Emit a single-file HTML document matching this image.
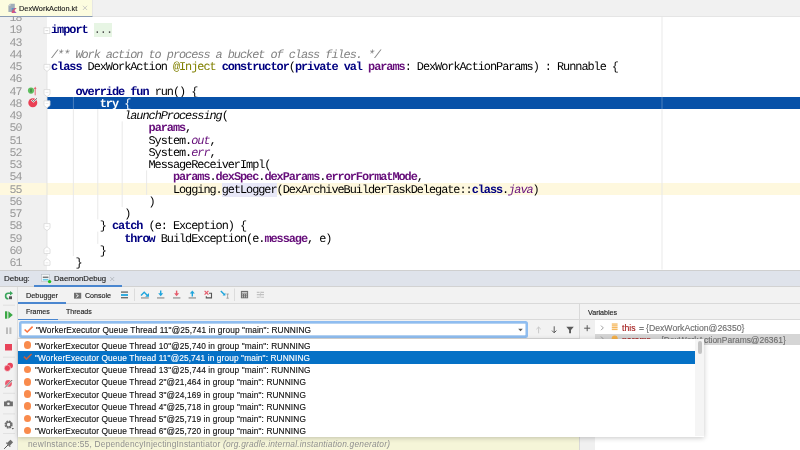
<!DOCTYPE html>
<html><head><meta charset="utf-8">
<style>
*{margin:0;padding:0;box-sizing:border-box}
html,body{width:800px;height:450px;overflow:hidden;background:#fff;font-family:"Liberation Sans",sans-serif;position:relative}
.a{position:absolute}
.ln,.ui,#tabtxt,#popup{will-change:transform}
.ui,#tabtxt,.prow{-webkit-text-stroke:0.14px currentColor}
#tabbar{left:0;top:0;width:800px;height:16.5px;background:#f1f1f1;border-bottom:1.6px solid #e5e5e5}
#tab{left:0;top:0;width:92.5px;height:16.5px;background:#fcfcdf;border-bottom:1.6px solid #8a9cb4;border-right:0.6px solid #e6e6e6}
#tabtxt{left:18.7px;top:3.9px;font-size:7.35px;color:#222;line-height:10px;white-space:nowrap}
#tabx{left:82px;top:3.5px;font-size:8px;color:#aaa;line-height:10px}
#gutter{left:0;top:16.5px;width:47px;height:253.5px;background:#f0f0f0}
#editor{left:47px;top:16.5px;width:753px;height:253.5px;background:#fff}
#code{left:0;top:16.5px;width:800px;height:253px;overflow:hidden}
.ln{position:absolute;left:0;width:800px;height:12.28px;font-family:"Liberation Mono",monospace;font-size:11.9px;letter-spacing:-1.04px;line-height:12.2px;white-space:pre;text-rendering:geometricPrecision}
.ln.exec{background:linear-gradient(to right,transparent 47px,#0751a8 47px)}
.ln.exec .txt,.ln.exec .txt span{color:#fff}
.ln.caret{background:#fef8de}
.num{position:absolute;left:0;width:21.6px;text-align:right;color:#999;top:2.2px;font-size:11.6px;letter-spacing:-0.86px}
.txt{position:absolute;left:51px;color:#000;top:0.9px}
.k,.kw{color:#000080;font-weight:bold}
.cm{color:#808080;font-style:italic}
.an{color:#808000}
.pr{color:#660e7a;font-weight:bold}
.st{color:#660e7a;font-style:italic}
.it{font-style:italic}
.fold{background:#e7f5e4;color:#555}
.ul{background:#e8e8f8}
.guide{position:absolute;width:1px;background:#e8e8e8}
#margin{left:662px;top:16px;width:1px;height:254px;background:#ececec}
/* debug */
#sep1{left:0;top:269.5px;width:800px;height:1px;background:#cfcfcf}
#dbar{left:0;top:270.5px;width:800px;height:15.5px;background:#dfe3eb}
#sep2{left:0;top:286px;width:800px;height:1px;background:#d2d2d2}
#lefttb{left:0;top:287px;width:18px;height:163px;background:#f2f2f2;border-right:1px solid #dedede}
#tb{left:18px;top:287px;width:783px;height:16.5px;background:#f2f2f2;border-bottom:1px solid #d9d9d9}
#frh{left:18px;top:303.5px;width:563px;height:16.5px;background:#f2f2f2;border-bottom:1px solid #d9d9d9}
#varh{left:579.3px;top:303.5px;width:220.7px;height:16.5px;background:#f2f2f2;border-bottom:1px solid #d9d9d9;border-left:1px solid #d9d9d9}
#combrow{left:18px;top:320px;width:563px;height:18.5px;background:#f2f2f2;border-bottom:1px solid #d9d9d9}
#combo{left:18.6px;top:320.9px;width:509.6px;height:17.4px;background:#fff;border:2px solid #8fbdf0;border-radius:2.5px;box-shadow:inset 0 0 0 0.4px #6aa6e6}
#frlist{left:18px;top:338.5px;width:563px;height:112px;background:#fff}
#botrow{left:18px;top:436px;width:563px;height:14px;background:#f5f5d8}
#plusc{left:579.3px;top:320px;width:15.9px;height:130px;background:#f0f0f0;border-left:1px solid #d9d9d9}
#vlist{left:595px;top:320px;width:205px;height:130px;background:#fff}
#vsel{left:595px;top:333.5px;width:205px;height:11.5px;background:#d5d5d5}
.ui{position:absolute;white-space:nowrap;color:#222}
#popup{left:18px;top:338.5px;width:686px;height:97.5px;background:#fff;box-shadow:0 1px 5px rgba(0,0,0,0.22)}
.prow{position:absolute;left:0;width:677px;height:12.15px;font-size:8.3px;letter-spacing:0.12px;line-height:12.15px;color:#111;white-space:nowrap}
.prow .dot{position:absolute;left:5.6px;top:2.3px;width:7.5px;height:7.5px;border-radius:50%;background:#f98b4d}
.prow .t{position:absolute;left:17px;top:0.6px}
.prow.sel{background:#0571c6;color:#fff}
#sbtrack{left:695px;top:338.5px;width:9px;height:97.5px;background:#f5f5f5}
#sbthumb{left:697.8px;top:340.7px;width:4px;height:13px;background:#c4c4c4;border-radius:2px}
</style></head><body>
<div id="tabbar" class="a"></div>
<div id="tab" class="a"></div>
<div id="tabtxt" class="a">DexWorkAction.kt</div>
<div id="gutter" class="a"></div>
<div id="editor" class="a"></div>
<div id="code" class="a">
<div class="ln" style="top:-5.37px"><span class="num">18</span><span class="txt"></span></div>
<div class="ln" style="top:6.88px"><span class="num">19</span><span class="txt"><span class="k">import</span> <span class="fold">...</span></span></div>
<div class="ln" style="top:19.13px"><span class="num">43</span><span class="txt"></span></div>
<div class="ln" style="top:31.38px"><span class="num">44</span><span class="txt"><span class="cm">/** Work action to process a bucket of class files. */</span></span></div>
<div class="ln" style="top:43.63px"><span class="num">45</span><span class="txt"><span class="k">class</span> DexWorkAction <span class="an">@Inject</span> <span class="k">constructor</span>(<span class="k">private val</span> <span class="pr">params</span>: DexWorkActionParams) : Runnable {</span></div>
<div class="ln" style="top:55.88px"><span class="num">46</span><span class="txt"></span></div>
<div class="ln" style="top:68.13px"><span class="num">47</span><span class="txt">    <span class="k">override fun</span> run() {</span></div>
<div class="ln exec" style="top:80.38px"><span class="num">48</span><span class="txt">        <span class="kw">try</span><span class="w"> {</span></span></div>
<div class="ln" style="top:92.63px"><span class="num">49</span><span class="txt">            <span class="it">launchProcessing</span>(</span></div>
<div class="ln" style="top:104.88px"><span class="num">50</span><span class="txt">                <span class="pr">params</span>,</span></div>
<div class="ln" style="top:117.13px"><span class="num">51</span><span class="txt">                System.<span class="st">out</span>,</span></div>
<div class="ln" style="top:129.38px"><span class="num">52</span><span class="txt">                System.<span class="st">err</span>,</span></div>
<div class="ln" style="top:141.63px"><span class="num">53</span><span class="txt">                MessageReceiverImpl(</span></div>
<div class="ln" style="top:153.88px"><span class="num">54</span><span class="txt">                    <span class="pr">params</span>.<span class="pr">dexSpec</span>.<span class="pr">dexParams</span>.<span class="pr">errorFormatMode</span>,</span></div>
<div class="ln caret" style="top:166.13px"><span class="num">55</span><span class="txt">                    Logging.<span class="ul">getLogger</span>(DexArchiveBuilderTaskDelegate::<span class="k">class</span>.<span class="st">java</span>)</span></div>
<div class="ln" style="top:178.38px"><span class="num">56</span><span class="txt">                )</span></div>
<div class="ln" style="top:190.63px"><span class="num">57</span><span class="txt">            )</span></div>
<div class="ln" style="top:202.88px"><span class="num">58</span><span class="txt">        } <span class="k">catch</span> (e: Exception) {</span></div>
<div class="ln" style="top:215.13px"><span class="num">59</span><span class="txt">            <span class="k">throw</span> BuildException(e.<span class="pr">message</span>, e)</span></div>
<div class="ln" style="top:227.38px"><span class="num">60</span><span class="txt">        }</span></div>
<div class="ln" style="top:239.63px"><span class="num">61</span><span class="txt">    }</span></div>
</div>
<div id="sep1" class="a"></div>
<div id="dbar" class="a"></div>
<div id="sep2" class="a"></div>
<div class="ui" style="left:3.5px;top:274px;font-size:8px;line-height:10px">Debug:</div>
<div class="ui" style="left:53.8px;top:274.2px;font-size:7.75px;line-height:10px">DaemonDebug</div>
<div class="a" style="left:33.6px;top:284.5px;width:88px;height:2px;background:#4a86cf"></div>
<div id="lefttb" class="a"></div>
<div id="tb" class="a"></div>
<div class="ui" style="left:25.8px;top:290.5px;font-size:7.3px;line-height:10px">Debugger</div>
<div class="ui" style="left:85.2px;top:290.5px;font-size:7.1px;line-height:10px">Console</div>
<div class="a" style="left:18px;top:302px;width:48px;height:2px;background:#4a86cf"></div>
<div id="frh" class="a"></div>
<div class="ui" style="left:25.8px;top:307px;font-size:7px;line-height:10px">Frames</div>
<div class="ui" style="left:65.9px;top:307px;font-size:7px;line-height:10px">Threads</div>
<div class="a" style="left:18px;top:318.5px;width:40px;height:2px;background:#4a86cf"></div>
<div id="varh" class="a"></div>
<div class="ui" style="left:588px;top:307.6px;font-size:7.1px;line-height:10px">Variables</div>
<div id="combrow" class="a"></div>
<div id="combo" class="a"></div>
<div class="ui" style="left:35.5px;top:324.8px;font-size:8.3px;letter-spacing:0.12px;line-height:10px;color:#111">"WorkerExecutor Queue Thread 11"@25,741 in group "main": RUNNING</div>
<div id="frlist" class="a"></div>
<div id="botrow" class="a"></div>
<div id="plusc" class="a"></div>
<div id="vlist" class="a"></div>
<div id="vsel" class="a"></div>
<div class="ui" style="left:621.5px;top:323.1px;font-size:8.7px;line-height:10px;color:#a31d1d">this</div>
<div class="ui" style="left:638.6px;top:323.1px;font-size:8.7px;line-height:10px;color:#555">=</div>
<div class="ui" style="left:645.6px;top:323.1px;font-size:8.7px;line-height:10px;color:#6e6e6e">{DexWorkAction@26350}</div>
<div class="ui" style="left:621.7px;top:334.6px;font-size:8.7px;line-height:10px;color:#a31d1d">params</div>
<div class="ui" style="left:650px;top:334.6px;font-size:8.7px;line-height:10px;color:#555">=</div>
<div class="ui" style="left:661.4px;top:334.6px;font-size:8.45px;line-height:10px;color:#6e6e6e">{DexWorkActionParams@26361}</div>
<div class="ui" style="left:27.8px;top:439px;font-size:8.4px;letter-spacing:0.2px;line-height:10px;color:#8f8f8f;-webkit-text-stroke:0 transparent">newInstance:55, DependencyInjectingInstantiator <i>(org.gradle.internal.instantiation.generator)</i></div>
<svg class="a" style="left:0;top:0" width="800" height="450" viewBox="0 0 800 450">
<!-- tab icon -->
<defs><linearGradient id="kg" x1="0" y1="0" x2="1" y2="1"><stop offset="0" stop-color="#22b0f0"/><stop offset="0.5" stop-color="#e9506a"/><stop offset="1" stop-color="#6a6df5"/></linearGradient></defs>
<path d="M8.4 5.6 L10.2 3.8 H14.8 V12.1 H8.4 Z" fill="#a2adb8"/>
<path d="M8.4 5.6 H10.2 V3.8" fill="none" stroke="#e4e6e0" stroke-width="0.6"/>
<path d="M11.7 8 H16.7 L14.2 10.45 L16.7 12.9 H11.7 Z" fill="url(#kg)"/>
<path d="M82.9 5.8 L87.1 10 M87.1 5.8 L82.9 10" stroke="#c0c0c0" stroke-width="0.8"/>
<!-- fold markers -->
<path d="M47 71 V256" stroke="#dedede" stroke-width="0.8"/>
<g fill="#fff" stroke="#d8d8d8" stroke-width="0.8">
<rect x="44" y="27.8" width="5.8" height="5.8"/>
<path d="M44 64.4 H50 V69.1 L47 71.4 L44 69.1 Z"/>
<path d="M44 89.6 H50 V94.3 L47 96.6 L44 94.3 Z"/>
<path d="M44 100.8 H50 V105.5 L47 107.8 L44 105.5 Z"/>
<path d="M44 223.6 H50 V228.3 L47 230.6 L44 228.3 Z"/>
<path d="M44 253.5 H50 V249.1 L47 246.8 L44 249.1 Z"/>
<path d="M44 265.3 H50 V260.9 L47 258.6 L44 260.9 Z"/>
</g>
<path d="M45.4 30.6 H48.2" stroke="#c8c8c8" stroke-width="0.7"/>
<path d="M45.6 67.2 H48.4 M45.6 92.4 H48.4 M45.6 103.6 H48.4 M45.6 226.4 H48.4 M45.6 251 H48.4 M45.6 262.8 H48.4" stroke="#d8d8d8" stroke-width="0.6"/>
<!-- guides -->
<g stroke="#e6e6e6" stroke-width="0.9">
<path d="M73.4 109.13 V256.13"/>
<path d="M97.8 109.13 V219.38 M97.8 231.63 V243.88"/>
<path d="M122.2 121.38 V207.13"/>
<path d="M146.6 170.38 V194.88"/>
<path d="M662 16.5 V96.88 M662 109.13 V269.5"/>
</g>
<path d="M73.4 96.88 V109.13 M662 96.88 V109.13" stroke="rgba(255,255,255,0.3)" stroke-width="0.9"/>
<!-- gutter icons -->
<circle cx="31" cy="90.6" r="3.1" fill="#5fbf5f"/>
<rect x="30.5" y="88.8" width="1" height="3.6" fill="#3a6b3a"/>
<path d="M35.2 88 V95.3" stroke="#e5606e" stroke-width="0.9"/>
<path d="M33.9 89 L35.2 86.5 L36.5 89 Z" fill="#e5606e"/>
<circle cx="32.8" cy="102.8" r="4.5" fill="#ea3f54"/>
<path d="M31.6 99.8 L33.5 101.6 L37 98.3" fill="none" stroke="#fff" stroke-width="1.8"/>
<path d="M31.6 99.8 L33.5 101.6 L37 98.3" fill="none" stroke="#555" stroke-width="0.9"/>
<!-- daemon debug icon -->
<rect x="41.6" y="274.5" width="8" height="7" fill="#f4f6f8" stroke="#b5bcc4" stroke-width="0.6"/>
<rect x="42.8" y="276.6" width="5.6" height="1.3" fill="#6d6d6d"/>
<rect x="42.8" y="278.9" width="5.6" height="1.6" fill="#6ccbe8"/>
<circle cx="49.6" cy="281.6" r="1.7" fill="#1fc11f"/>
<path d="M110.2 277 L114.2 281 M114.2 277 L110.2 281" stroke="#b0b4ba" stroke-width="0.8"/>
<!-- left toolbar -->
<path d="M8.4 298.7 A2.7 2.7 0 0 1 8.2 293.3 H10.4" fill="none" stroke="#3ba55c" stroke-width="1.6"/>
<path d="M10 291 L13 293.3 L10 295.6 Z" fill="#3ba55c"/>
<rect x="9" y="296.3" width="3" height="2.9" fill="#555"/>
<path d="M3 305.2 H15" stroke="#dcdcdc" stroke-width="0.8"/>
<rect x="5" y="311.3" width="2.3" height="7.4" fill="#3aa844"/>
<path d="M8.4 311.3 L12.8 315 L8.4 318.7 Z" fill="#3aa844"/>
<rect x="6" y="327.4" width="2" height="6.6" fill="#bcbcbc"/>
<rect x="9.4" y="327.4" width="2" height="6.6" fill="#bcbcbc"/>
<rect x="5" y="344" width="7" height="6.5" fill="#e8445a"/>
<path d="M3 357.2 H15" stroke="#dcdcdc" stroke-width="0.8"/>
<circle cx="10.1" cy="365.6" r="2.9" fill="#e8445a"/>
<circle cx="7.4" cy="368.2" r="3.1" fill="#e8445a" stroke="#f2f2f2" stroke-width="0.5"/>
<circle cx="8.5" cy="383.4" r="3.4" fill="#ec5a6e"/>
<path d="M5 387.6 L12.2 380" stroke="#f2f2f2" stroke-width="1.8"/>
<path d="M5 387.6 L12.2 380" stroke="#555" stroke-width="0.9"/>
<path d="M3 393.3 H15" stroke="#dcdcdc" stroke-width="0.8"/>
<path d="M4 401.6 H6.2 L7 400.4 H9.9 L10.7 401.6 H12.9 V406.3 H4 Z" fill="#6e6e6e"/>
<circle cx="8.45" cy="403.7" r="1.3" fill="#f2f2f2"/>
<path d="M3 413.9 H15" stroke="#dcdcdc" stroke-width="0.8"/>
<circle cx="8.6" cy="424.6" r="3" fill="none" stroke="#6e6e6e" stroke-width="2.2" stroke-dasharray="1.6 0.75"/>
<circle cx="8.6" cy="424.6" r="2.4" fill="none" stroke="#6e6e6e" stroke-width="1.2"/>
<path d="M11.6 428 H14 L12.8 429.4 Z" fill="#555"/>
<path d="M3 433.5 H15" stroke="#dcdcdc" stroke-width="0.8"/>
<path d="M4.2 448.8 L8.2 444.8" stroke="#555" stroke-width="1"/>
<path d="M7 443 L10.5 439.7 L13.1 442.3 L9.8 445.8 Z" fill="#6e6e6e"/>
<path d="M6.3 442.6 L10.3 446.6" stroke="#6e6e6e" stroke-width="1.3"/>
<!-- toolbar -->
<rect x="74" y="292.8" width="7.2" height="5.8" fill="#707070"/>
<path d="M76.2 294 L78.4 295.7 L76.2 297.4" fill="none" stroke="#fff" stroke-width="0.9"/>
<rect x="121" y="291.4" width="7" height="1.4" fill="#6e6e6e"/>
<rect x="121" y="294.1" width="7" height="1.8" fill="#1ea4dc"/>
<rect x="121" y="297" width="7" height="1.4" fill="#6e6e6e"/>
<path d="M134.5 288.5 V301" stroke="#d6d6d6" stroke-width="0.8"/>
<path d="M141 295.4 L144.2 292.2 L147.2 295.2" fill="none" stroke="#1ea4dc" stroke-width="1.4"/>
<path d="M145.2 296.8 H149 V293 Z" fill="#1ea4dc"/>
<rect x="141" y="297.5" width="7.8" height="0.9" fill="#6e6e6e"/>
<path d="M160.7 290.6 V295" stroke="#1ea4dc" stroke-width="1.4"/>
<path d="M158.2 293.2 L160.7 296.2 L163.2 293.2 Z" fill="#1ea4dc"/>
<rect x="157" y="297.5" width="7.4" height="0.9" fill="#6e6e6e"/>
<path d="M176.6 290.6 V295" stroke="#e55b6c" stroke-width="1.4"/>
<path d="M174.1 293.2 L176.6 296.2 L179.1 293.2 Z" fill="#e55b6c"/>
<rect x="173" y="297.5" width="7.4" height="0.9" fill="#6e6e6e"/>
<path d="M192.3 292.2 V296.4" stroke="#1ea4dc" stroke-width="1.4"/>
<path d="M189.8 293.6 L192.3 290.6 L194.8 293.6 Z" fill="#1ea4dc"/>
<rect x="188.6" y="297.5" width="7.4" height="0.9" fill="#6e6e6e"/>
<path d="M204.6 290.9 L208.4 294.7 M208.4 290.9 L204.6 294.7" stroke="#e55b6c" stroke-width="1.2"/>
<path d="M209 293.2 H211.5 V297.9 H206.3 V296.2" fill="none" stroke="#555" stroke-width="1.1"/>
<path d="M220.8 291 L224.6 294.8" stroke="#1ea4dc" stroke-width="1.4"/>
<path d="M225.4 292.8 V295.6 H222.6 Z" fill="#1ea4dc"/>
<path d="M226.4 294 H228.8 M227.6 294 V298.2 M226.4 298.2 H228.8" stroke="#8a8a8a" stroke-width="0.7"/>
<path d="M234.5 288.5 V301" stroke="#d6d6d6" stroke-width="0.8"/>
<rect x="240.9" y="290.9" width="7.2" height="7.4" fill="#707070"/>
<rect x="241.9" y="292" width="5.2" height="1.6" fill="#c8c8c8"/>
<g fill="#dcdcdc"><rect x="242" y="294.4" width="1" height="1"/><rect x="244" y="294.4" width="1" height="1"/><rect x="246" y="294.4" width="1" height="1"/><rect x="242" y="296.3" width="1" height="1"/><rect x="244" y="296.3" width="1" height="1"/><rect x="246" y="296.3" width="1" height="1"/></g>
<path d="M256.8 292.4 H259.6 M261 292.4 H264 M256.8 294.6 H264 M256.8 297.2 H259.4 M261.2 297.2 H264" stroke="#c2c2c2" stroke-width="1.1"/>
<path d="M260.8 291.5 L260 298" stroke="#c2c2c2" stroke-width="0.7"/>
<!-- combobox row icons -->
<path d="M24.6 329.5 L27.2 332 L32.6 326.6" fill="none" stroke="#fb7440" stroke-width="1.6"/>
<path d="M518.2 328.7 H522.8 L520.5 331.3 Z" fill="#5a5a5a"/>
<path d="M538.6 327 V333.3 M536.4 329.2 L538.6 327 L540.8 329.2" fill="none" stroke="#c4c4c4" stroke-width="0.9"/>
<path d="M554.2 326.3 V332.8 M552 330.6 L554.2 332.8 L556.4 330.6" fill="none" stroke="#5a5a5a" stroke-width="1"/>
<path d="M566.3 326.8 H573.8 L571 329.9 V333.3 H569.1 V329.9 Z" fill="#5a5a5a"/>
<path d="M584.2 328.2 H590.2 M587.2 325.2 V331.2" stroke="#5a5a5a" stroke-width="1"/>
<path d="M601 325.6 L603.3 327.9 L601 330.2" fill="none" stroke="#888" stroke-width="0.8"/>
<g fill="#f6b85e"><rect x="611.8" y="323.4" width="5.8" height="1.3"/><rect x="611.8" y="325.2" width="5.8" height="1.3"/><rect x="611.8" y="327" width="5.8" height="1.3"/><rect x="611.8" y="328.8" width="5.8" height="1.3"/></g>
<path d="M601 336.6 L603.3 338.9" fill="none" stroke="#888" stroke-width="0.8"/>
<circle cx="614.7" cy="338.6" r="3" fill="#f5b048"/>
</svg>
<div id="popup" class="a">
<div class="prow" style="top:0.20px"><span class="dot"></span><span class="t">"WorkerExecutor Queue Thread 10"@25,740 in group "main": RUNNING</span></div>
<div class="prow sel" style="top:12.40px"><svg class="chk" width="40" height="12" style="position:absolute;left:0;top:0"><path d="M6.3 9.2 L8.9 11.7 L14 6.6" transform="translate(-0.4,-3.6)" fill="none" stroke="#c8603c" stroke-width="1.5"/></svg><span class="t">"WorkerExecutor Queue Thread 11"@25,741 in group "main": RUNNING</span></div>
<div class="prow" style="top:24.60px"><span class="dot"></span><span class="t">"WorkerExecutor Queue Thread 13"@25,744 in group "main": RUNNING</span></div>
<div class="prow" style="top:36.80px"><span class="dot"></span><span class="t">"WorkerExecutor Queue Thread 2"@21,464 in group "main": RUNNING</span></div>
<div class="prow" style="top:49.00px"><span class="dot"></span><span class="t">"WorkerExecutor Queue Thread 3"@24,169 in group "main": RUNNING</span></div>
<div class="prow" style="top:61.20px"><span class="dot"></span><span class="t">"WorkerExecutor Queue Thread 4"@25,718 in group "main": RUNNING</span></div>
<div class="prow" style="top:73.40px"><span class="dot"></span><span class="t">"WorkerExecutor Queue Thread 5"@25,719 in group "main": RUNNING</span></div>
<div class="prow" style="top:85.60px"><span class="dot"></span><span class="t">"WorkerExecutor Queue Thread 6"@25,720 in group "main": RUNNING</span></div>
</div>
<div id="sbtrack" class="a"></div>
<div id="sbthumb" class="a"></div>

</body></html>
